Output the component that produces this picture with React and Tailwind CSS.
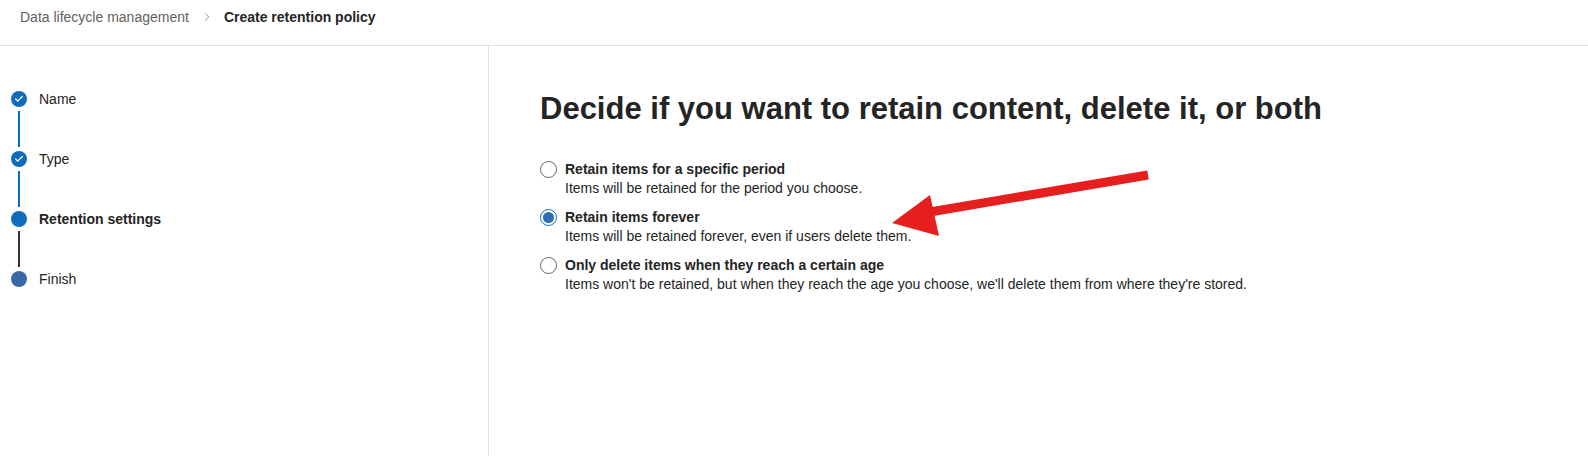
import { Check, ChevronRight } from "lucide-react";

const steps = [
  { label: "Name", state: "done" },
  { label: "Type", state: "done" },
  { label: "Retention settings", state: "current" },
  { label: "Finish", state: "todo" },
];

const options = [
  {
    title: "Retain items for a specific period",
    desc: "Items will be retained for the period you choose.",
    checked: false,
  },
  {
    title: "Retain items forever",
    desc: "Items will be retained forever, even if users delete them.",
    checked: true,
  },
  {
    title: "Only delete items when they reach a certain age",
    desc: "Items won't be retained, but when they reach the age you choose, we'll delete them from where they're stored.",
    checked: false,
  },
];

function StepDot({ state }) {
  if (state === "done") {
    return (
      <div className="w-4 h-4 rounded-full bg-[#0f6cbd] flex items-center justify-center">
        <Check className="w-[10px] h-[10px] text-white" strokeWidth={3} />
      </div>
    );
  }
  if (state === "current") {
    return <div className="w-4 h-4 rounded-full bg-[#0f6cbd]" />;
  }
  return <div className="w-4 h-4 rounded-full bg-[#3868a8]" />;
}

export default function App() {
  return (
    <div className="h-[456px] bg-white text-[#242424] font-['Segoe_UI','Liberation_Sans',sans-serif] flex flex-col overflow-hidden">
      {/* breadcrumb */}
      <div className="h-[46px] shrink-0 border-b border-[#e0e0e0] flex items-center pl-[20px] pb-[11px] text-[14px]">
        <span className="text-[#616161]">Data lifecycle management</span>
        <ChevronRight className="w-[14px] h-[14px] text-[#8a8a8a] ml-[11px] mr-[10px]" strokeWidth={1.5} />
        <span className="font-semibold text-[#242424]">Create retention policy</span>
      </div>

      <div className="flex flex-1 min-h-0">
        {/* stepper */}
        <div className="w-[489px] shrink-0 border-r border-[#e0e0e0] pt-[45px] pl-[11px]">
          {steps.map((s, i) => (
            <div key={s.label} className="flex">
              <div className="flex flex-col items-center w-4">
                <StepDot state={s.state} />
                {i < steps.length - 1 && (
                  <div
                    className={
                      "w-[2px] h-[36px] my-[4px] " +
                      (i < 2 ? "bg-[#0f6cbd]" : "bg-[#333333]")
                    }
                  />
                )}
              </div>
              <div
                className={
                  "ml-[12px] text-[14px] leading-[16px] " +
                  (s.state === "current" ? "font-semibold" : "")
                }
              >
                {s.label}
              </div>
            </div>
          ))}
        </div>

        {/* content */}
        <div className="relative flex-1 pl-[51px] pt-[43px]">
          <h1 className="text-[31px] leading-[40px] font-semibold text-[#242424]">
            Decide if you want to retain content, delete it, or both
          </h1>
          <div className="mt-[31px] flex flex-col gap-[10px]">
            {options.map((o) => (
              <label key={o.title} className="flex items-start">
                <span
                  className={
                    "mt-[1px] w-[17px] h-[17px] rounded-full border flex items-center justify-center shrink-0 " +
                    (o.checked ? "border-[#0f6cbd]" : "border-[#616161]")
                  }
                >
                  {o.checked && <span className="w-[11px] h-[11px] rounded-full bg-[#2f6fb6]" />}
                </span>
                <span className="ml-[8px] text-[14px] leading-[19px]">
                  <span className="block font-semibold">{o.title}</span>
                  <span className="block">{o.desc}</span>
                </span>
              </label>
            ))}
          </div>

          {/* annotation arrow */}
          <svg
            className="absolute left-0 top-0 pointer-events-none"
            width="1099"
            height="410"
            viewBox="490 46 1099 410"
          >
            <line x1="1149" y1="175" x2="925" y2="213" stroke="#e61e1e" strokeWidth="9" />
            <polygon points="893,223 931,195 940,236" fill="#e61e1e" />
          </svg>
        </div>
      </div>
    </div>
  );
}
